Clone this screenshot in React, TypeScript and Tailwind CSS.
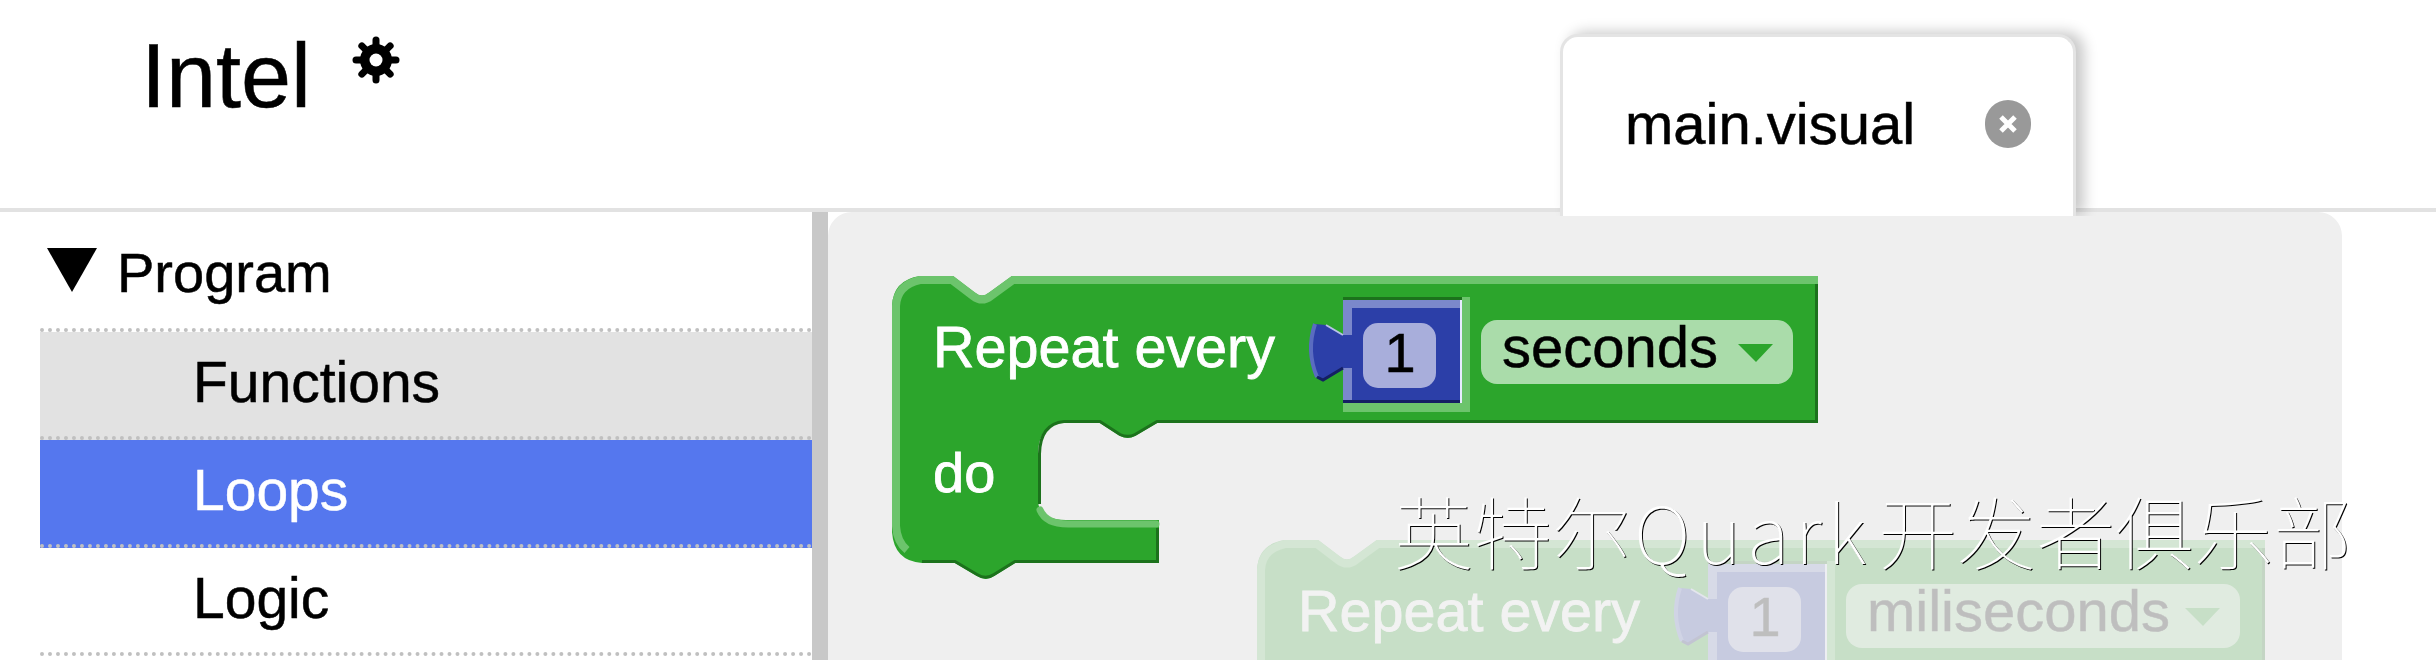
import * as React from "react";

const GREEN = "#2ca52c";
const HIGHLIGHT = "#6cc46c";
const SHADOW = "#1c721c";

const Gear = () => (
  <svg width="48" height="48" viewBox="0 0 48 48" className="ml-[41px] mt-[10px]">
    {[0, 45, 90, 135].map((angle) => (
      <path
        key={angle}
        d="M24 4 L24 44"
        stroke="#000"
        strokeWidth="7"
        strokeLinecap="round"
        transform={`rotate(${angle} 24 24)`}
      />
    ))}
    <circle cx="24" cy="24" r="16" fill="#000" />
    <circle cx="24" cy="24" r="6.5" fill="#fff" />
  </svg>
);

const Block = ({
  fade,
  width,
  fieldLabel,
  fieldWidth,
}: {
  fade?: boolean;
  width: number;
  fieldLabel: string;
  fieldWidth: number;
}) => {
  const fieldX = 589;
  const arrowEnd = fieldX + fieldWidth - 20;
  // outline is relative to the block's top left corner
  const outline = `M0 30 Q1 4 28 0 L61 0 L82 16 Q90 23 98 16 L120 0 L${width} 0 L${width} 147 L265 147 L243 160 Q236 164 228 160 L208 147 L172 146 Q146 149 146 178 L146 226 Q148 244 174 244 L267 244 L267 287 L123 287 L102 300 Q94 306 85 300 L63 287 L30 287 Q2 285 0 256 Z`;
  return (
    <svg
      width={width + 4}
      height={fade ? 120 : 310}
      viewBox={`0 0 ${width + 4} ${fade ? 120 : 310}`}
      className={`absolute ${fade ? "left-[429px] top-[328px] opacity-20" : "left-[64px] top-[64px]"}`}
      fontFamily='"Liberation Sans", Arial, sans-serif'
    >
      <path d={outline} fill={GREEN} />
      {/* top and left highlight */}
      <path
        d={`M15 274 Q5 266 4 250 L4 30 Q5 9 28 4 L60 4 L81 20 Q90 27 99 20 L121 4 L${width} 4`}
        fill="none"
        stroke={HIGHLIGHT}
        strokeWidth="8"
      />
      {/* lower edge shadow */}
      <path
        d={`M30 285.5 L63 285.5 L85 298.5 Q94 304 102 298.5 L123 285.5 L265.5 285.5 L265.5 252 M${width - 1.5} 8 L${width - 1.5} 145.5 L265 145.5 L243 158.5 Q236 162 228 158.5 L208 145.5 L172 145.5 Q148 148 147.5 178 L147.5 228`}
        fill="none"
        stroke={SHADOW}
        strokeWidth="3"
      />
      {/* highlight on the bottom of the statement slot */}
      <path
        d="M148 234 Q154 248 176 248 L264 248"
        fill="none"
        stroke={HIGHLIGHT}
        strokeWidth="7"
        strokeLinecap="round"
      />

      <text x="41" y="91" fontSize="57.5" fill="#fff" stroke="#fff" strokeWidth="0.8">
        Repeat every
      </text>
      {!fade && (
        <text x="41" y="216" fontSize="56" fill="#fff" stroke="#fff" strokeWidth="0.8">
          do
        </text>
      )}

      {/* value socket and number block */}
      <rect x="451" y="21" width="127" height="115" fill={HIGHLIGHT} />
      <rect x="451" y="21" width="119" height="3" fill={SHADOW} />
      <rect x="451" y="24" width="119" height="103" fill="#7b88cb" />
      <path d="M451 59 L434 49 L423 48 Q414 75 425 101 L431 104 L451 92 Z" fill="#2c3fa8" />
      <path d="M423 48 Q414 75 425 101" fill="none" stroke="#5a6cc0" strokeWidth="4" />
      <path d="M425 101 L431 104 L451 92" fill="none" stroke="#141f63" strokeWidth="3" />
      <path d="M434 49 L451 59" fill="none" stroke="#b9c2e8" strokeWidth="2" />
      <rect x="460" y="32" width="108" height="92" fill="#2c3fa8" />
      <rect x="451" y="59" width="12" height="33" fill="#2c3fa8" />
      <rect x="451" y="124" width="117" height="3" fill="#141f63" />
      <rect x="568" y="24" width="2" height="103" fill="#e8ecff" />
      <rect x="471" y="47" width="73" height="65" rx="15" fill="#a8aedb" />
      <text x="508" y="96" fontSize="56" fill="#000" textAnchor="middle" stroke="#000" strokeWidth="0.5">
        1
      </text>

      {/* dropdown field */}
      <rect x={fieldX} y="44" width={fieldWidth} height="64" rx="16" fill="#aadcaa" />
      <text x={fieldX + 21} y="91" fontSize="58" fill="#000" stroke="#000" strokeWidth="0.5">
        {fieldLabel}
      </text>
      <path d={`M${arrowEnd - 35} 68 L${arrowEnd} 68 L${arrowEnd - 17} 86 Z`} fill={GREEN} />
    </svg>
  );
};

const rows = [
  { label: "Functions", cls: "bg-[#e2e2e2] text-black" },
  { label: "Loops", cls: "bg-[#5577ee] text-white" },
  { label: "Logic", cls: "bg-white text-black" },
];

export default function App() {
  return (
    <div className="h-[660px] w-[2436px] overflow-hidden bg-white font-['Liberation_Sans',Arial,sans-serif] text-black [-webkit-text-stroke:0.5px]">
      <div className="flex h-[212px] items-end border-b-4 border-[#e2e2e2]">
        <div className="flex h-full w-[1560px] items-start pl-[141px] pt-[26px]">
          <span className="text-[90px] leading-[100px]">Intel</span>
          <Gear />
        </div>
        <div className="relative z-10 -mb-[8px] flex h-[182px] w-[516px] items-start justify-between rounded-t-[18px] border-x-[3px] border-t-[3px] border-[#e4e4e4] bg-white pl-[62px] pr-[42px] pt-[55px] shadow-[8px_-2px_14px_rgba(0,0,0,0.22)] [clip-path:inset(-30px_-30px_0_-30px)]">
          <span className="text-[58px] leading-[64px]">main.visual</span>
          <span className="mt-[8px] flex h-[48px] w-[46px] items-center justify-center rounded-full bg-[#999]">
            <svg width="20" height="20" viewBox="0 0 20 20">
              <path d="M3 3 L17 17 M17 3 L3 17" stroke="#fff" strokeWidth="5" />
            </svg>
          </span>
        </div>
      </div>
      <div className="flex h-[448px]">
        <div className="w-[40px]" />
        <div className="w-[772px]">
          <div className="flex h-[120px] items-start border-b-4 border-dotted border-[#c0c0c0] pt-[31px]">
            <svg width="50" height="44" viewBox="0 0 50 44" className="ml-[7px] mt-[5px]">
              <path d="M0 0 L50 0 L25 44 Z" fill="#000" />
            </svg>
            <span className="ml-[20px] text-[56px] leading-[60px]">Program</span>
          </div>
          {rows.map((row) => (
            <div
              key={row.label}
              className={`h-[108px] border-b-4 border-dotted border-[#c0c0c0] pl-[153px] pt-[18px] text-[57px] leading-[64px] ${row.cls}`}
            >
              {row.label}
            </div>
          ))}
        </div>
        <div className="w-[16px] bg-[#c8c8c8]" />
        <div className="relative h-full w-[1514px] rounded-t-[24px] bg-[#efefef]">
          <Block width={926} fieldLabel="seconds" fieldWidth={312} />
          <Block fade width={1008} fieldLabel="miliseconds" fieldWidth={394} />
          <div className="absolute left-[566px] top-[279px] whitespace-nowrap font-['Noto_Sans_CJK_SC',sans-serif] text-[79px] font-thin leading-[78px] text-white [-webkit-text-stroke:0px] [text-shadow:1px_1px_0_#000]">
            英特尔<span className="ml-[3px] mr-[6px] tracking-[5.5px]">Quark</span>开发者俱乐部
          </div>
        </div>
      </div>
    </div>
  );
}
